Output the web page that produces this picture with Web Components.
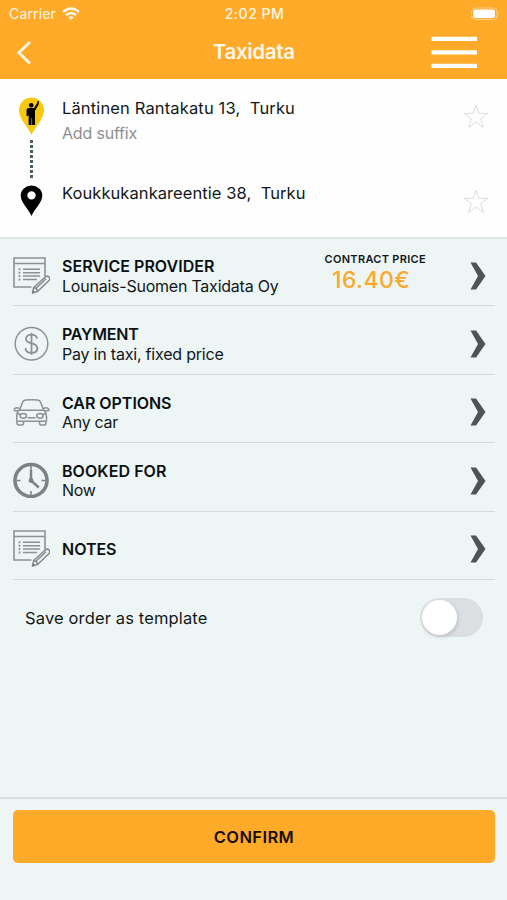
<!DOCTYPE html>
<html lang="en">
<head>
<meta charset="utf-8">
<title>Taxidata</title>
<style>
html,body{margin:0;height:900px;overflow:hidden;background:#eef5f5}
body{font-family:Inter,"Liberation Sans",sans-serif;color:#111819}
</style>
</head>
<body>
<order-screen></order-screen>
<script>
const define = (name, html, setup) => customElements.define(name, class extends HTMLElement {
  connectedCallback() {
    if (this.shadowRoot) return;
    const t = document.createElement('template');
    t.innerHTML = html;
    this.attachShadow({mode: 'open'}).append(t.content.cloneNode(true));
    if (setup) setup.call(this, this.shadowRoot);
  }
});

/* One line of text whose tracking is set so that it spans the given width. */
define('ui-text', `<style>:host{display:block;white-space:pre;line-height:20px}span{display:inline-block}</style><span><slot></slot></span>`, function (root) {
  const want = parseFloat(this.getAttribute('span'));
  if (!want) return;
  const s = root.querySelector('span');
  const n = this.textContent.length;
  const gap = (want - s.getBoundingClientRect().width) / n;
  s.style.letterSpacing = gap.toFixed(3) + 'px';
});

const notes = `<g fill="none" stroke="#8c9292" stroke-width="1.6"><path d="M32 19.5V1H1v29h17.500M1 6.500h31"/><path stroke-width="1.500" d="M10 12.300h17M10 15.700h17M10 19.100h17M10 22.500h14"/><path stroke-width="1.700" stroke-dasharray="2 1.400" d="M6.500 11.300v13"/></g><g fill="#eef5f5" stroke="#858b8b" stroke-width="1.500" stroke-linejoin="round"><path d="M19.500 36l1.200-5.500L32.500 19.800q2-1.500 3.500.2t0 3.500L24.800 34.200z"/><path d="M20.700 30.500q3 .3 4.100 3.700M22.700 31.500L33 21.800" fill="none"/></g><path d="M19.300 36.200l.8-3 2 2z" fill="#6f7575"/>`;
const icons = {
  notes: ['37', '37', notes],
  dollar: ['37', '37', `<g fill="none" stroke="#8c9292" stroke-width="1.500"><circle cx="18.500" cy="18.800" r="16.300"/><path stroke-width="1.800" d="M24 13.700q-.6-4-5.500-4t-5.500 4.100q0 3.400 5.500 4.500t5.900 4.900q0 4.600-5.900 4.600t-6-4.900M18.500 7.800v22"/></g>`],
  car: ['37', '37', `<g fill="none" stroke="#8c9292" stroke-width="1.500" stroke-linejoin="round" transform="translate(0 1.300)"><path d="M6.700 15.500L9.600 8q.8-2 3-2.200 6-.7 12 0 2.200.2 3 2.200l2.900 7.500M6 16h25q2.500 2.500 2.500 6v4q0 1-1 1H4.700q-1 0-1-1v-4q0-3.500 2.300-6z"/><path d="M7 14.700q-3-2-5-.7-1 .8-.8 2.200l4.700.5M30 14.700q3-2 5-.7 1 .8.800 2.200l-4.700.5"/><path d="M4 27v1.800q0 1.900 1.700 1.900h3.100q1.700 0 1.700-1.900V27M26.500 27v1.800q0 1.900 1.700 1.900h3.100q1.700 0 1.700-1.900V27"/><ellipse cx="10.300" cy="21.500" rx="3.200" ry="2.400"/><ellipse cx="26.900" cy="21.500" rx="3.200" ry="2.400"/><path d="M4 19l3 1.200M33 19l-3 1.200M14.500 23.500h8"/></g>`],
  clock: ['37', '37', `<g transform="translate(0 1)"><circle cx="18" cy="18.500" r="16" fill="none" stroke="#7d8383" stroke-width="3.600"/><path stroke="#7d8383" stroke-width="1.500" d="M18 4v4M18 29v4M3.500 18.500h4M28.500 18.500h4"/><circle cx="18" cy="18.500" r="2.400" fill="#7d8383"/><path fill="none" stroke="#7d8383" stroke-width="2.500" d="M18 8v10.500l7.800 7"/></g>`],
  passenger: ['37', '40', `<path fill="#f7c90d" d="M18.500 39C16 32 6 23.500 6 14A12.500 12.500 0 0 1 31 14C31 23.500 21 32 18.500 39z"/><circle cx="18.200" cy="9.300" r="2.300"/><path d="M15 12h6l2.800-4.200 1-3 1.200.6-.4 3.200L22 14.800V29h-2.900v-7h-.6v7h-2.900v-9.500H14V14q0-2 1-2z"/><path d="M14.300 13v7" stroke="#000" stroke-width="1.500"/>`],
  pin: ['37', '34', `<path fill-rule="evenodd" d="M18.500 32C15.500 25 7.700 18.500 7.700 11.500A10.800 10 0 0 1 29.300 11.500C29.300 18.500 21.500 25 18.500 32zM18.500 7.200a4.200 4.200 0 1 0 0 8.400 4.200 4.200 0 0 0 0-8.400z"/>`],
  star: ['26', '26', `<path fill="none" stroke="#dcdede" d="M13 2l2.900 8.300 8.800.2-7 5.200 2.600 8.600L13 19.200l-7.300 5.100 2.600-8.600-7-5.200 8.800-.2z"/>`],
  chevron: ['16', '28', `<path fill="#4e5353" d="M.5.500H6L15.500 14 6 27.500H.5L8 14z"/>`],
  back: ['17', '25', `<path fill="none" stroke="#fff8e8" stroke-width="2.800" d="M15 2L3.800 12.800l11.200 10.700"/>`],
  menu: ['46', '34', `<path stroke="#fff" stroke-width="4.200" d="M.5 3.800h45.500M.5 17.300h45.500M.5 30.800h45.500"/>`],
  wifi: ['18', '14', `<g fill="none" stroke="#fff8e8" stroke-width="2.500"><path d="M1 5q8-7 16 0M4 8.200q5-4.300 10 0"/></g><path fill="#fff8e8" d="M9 13l-2.800-2.800q2.800-2 5.600 0z"/>`],
  battery: ['30', '14', `<rect x="1.500" y="1" width="25.500" height="11.500" rx="3.500" fill="none" stroke="#ffd08a" stroke-width="1"/><rect x="3" y="2.500" width="22" height="8.500" rx="2" fill="#fff"/><path d="M28.300 5q1.400 1.800 0 3.500z" fill="#ffd08a"/>`]
};
define('ui-icon', `<style>:host{display:block;flex:none}svg{display:block}</style>`, function (root) {
  const [w, h, body] = icons[this.getAttribute('name')] || ['0', '0', ''];
  const t = document.createElement('template');
  t.innerHTML = `<svg width="${w}" height="${h}" viewBox="0 0 ${w} ${h}">${body}</svg>`;
  root.append(t.content);
});

define('app-header', `<style>
:host{display:block;height:79px;box-sizing:border-box;background:#ffaa28;color:#fff8e8}
.status,.nav{display:grid;grid-template-columns:1fr auto 1fr;align-items:center}
.status{height:27px;padding:0 7px 0 9px;font-size:14px}
.left{display:flex;gap:6px;align-items:center}
.time{font-weight:500}
.nav{height:50px;padding:0 30.500px 0 15px}
.nav>:last-child,.status>:last-child{justify-self:end}
.title{font-size:20.500px;font-weight:600}
.title{padding-left:16px}
</style>
<div class="status"><div class="left"><ui-text span="47">Carrier</ui-text><ui-icon name="wifi"></ui-icon></div><ui-text class="time" span="59.500">2:02 PM</ui-text><ui-icon name="battery"></ui-icon></div>
<div class="nav"><ui-icon name="back"></ui-icon><ui-text class="title" span="82">Taxidata</ui-text><ui-icon name="menu"></ui-icon></div>`);

define('address-row', `<style>
:host{display:grid;grid-template-columns:37px 1fr 26px;column-gap:12px;height:85px;padding:0 18px 0 13px;font-size:16.500px}
.text{padding-top:4px}
.star{padding-top:9px}
::slotted([slot=suffix]){color:#8d8f8f;margin-top:5px;font-size:16px}
</style><div><slot name="icon"></slot></div><div class="text"><slot></slot><slot name="suffix"></slot></div><ui-icon class="star" name="star"></ui-icon>`);

define('address-panel', `<style>
:host{display:block;height:160px;box-sizing:border-box;padding-top:15px;background:#fefefe;border-bottom:2px solid #dde5e5}
.dots{width:2.500px;height:38px;margin:4px 0 0 17.300px;background:repeating-linear-gradient(#4a6068 0 2.600px,transparent 2.600px 5px)}
</style>
<address-row><div slot="icon"><ui-icon name="passenger" style="margin-top:2px"></ui-icon><div class="dots"></div></div><ui-text span="233">Läntinen Rantakatu 13,  Turku</ui-text><ui-text slot="suffix" span="75">Add suffix</ui-text></address-row>
<address-row><ui-icon slot="icon" name="pin" style="margin-top:5px"></ui-icon><ui-text span="243.500">Koukkukankareentie 38,  Turku</ui-text></address-row>`);

define('option-row', `<style>
:host{display:flex;align-items:center;height:68.400px;box-sizing:border-box;margin:0 12px 0 13px;padding-right:9px;border-bottom:1.500px solid #d2dada}
.icon{margin-top:6px}
.text{flex:1;margin-left:12px;padding-top:9px}
.chev{margin-top:8px}
::slotted(ui-text){font-size:16px;line-height:19.200px}
::slotted([slot=title]){font-weight:600;color:#0b1112}
</style><ui-icon class="icon"></ui-icon><div class="text"><slot name="title"></slot><slot></slot></div><slot name="aside"></slot><ui-icon class="chev" name="chevron"></ui-icon>`,
function (root) {
  const ic = document.createElement('ui-icon');
  ic.className = 'icon';
  ic.setAttribute('name', this.getAttribute('icon'));
  root.querySelector('.icon').replaceWith(ic);
});

define('price-tag', `<style>
:host{display:block;margin-right:44px;width:101.500px}
.cap{font-size:11px;font-weight:600;line-height:16px}
.sum{font-size:23px;font-weight:500;color:#fba92c;line-height:27px;margin-left:7.500px}
</style><ui-text class="cap" span="101.500">CONTRACT PRICE</ui-text><ui-text class="sum" span="78">16.40€</ui-text>`);

define('toggle-switch', `<style>
:host{display:block;width:62.500px;height:39px;border-radius:20px;background:#dcdfe2;box-sizing:border-box;padding:2px}
i{display:block;width:35px;height:35px;border-radius:50%;background:#fff;box-shadow:1px 2px 4px #0002}
</style><i></i>`);

define('order-screen', `<style>
:host{display:flex;flex-direction:column;width:507px;height:900px;background:#eef5f5}
.template{display:flex;align-items:center;justify-content:space-between;height:76px;padding:0 24.500px 0 25px;font-size:16.500px}
.grow{flex:1}
footer{height:103px;box-sizing:border-box;padding:11px 12px 0 13px;border-top:2px solid #d9e0e1}
button{display:flex;align-items:center;justify-content:center;width:100%;height:53px;border:0;border-radius:5px;background:#ffaa28;font:600 16.500px Inter,sans-serif;color:#120e08;padding:0}
</style>
<app-header></app-header>
<address-panel></address-panel>
<option-row icon="notes" style="height:67.400px"><ui-text slot="title" span="152.500">SERVICE PROVIDER</ui-text><ui-text span="216.500">Lounais-Suomen Taxidata Oy</ui-text><price-tag slot="aside"></price-tag></option-row>
<option-row icon="dollar"><ui-text slot="title" span="76.500">PAYMENT</ui-text><ui-text span="161.500">Pay in taxi, fixed price</ui-text></option-row>
<option-row icon="car"><ui-text slot="title" span="109.500">CAR OPTIONS</ui-text><ui-text span="56">Any car</ui-text></option-row>
<option-row icon="clock"><ui-text slot="title" span="104.500">BOOKED FOR</ui-text><ui-text span="33.500">Now</ui-text></option-row>
<option-row icon="notes"><ui-text slot="title" span="54.500">NOTES</ui-text></option-row>
<div class="template"><ui-text span="182.500">Save order as template</ui-text><toggle-switch></toggle-switch></div>
<div class="grow"></div>
<footer><button><ui-text span="80.500">CONFIRM</ui-text></button></footer>`);
</script>
</body>
</html>
